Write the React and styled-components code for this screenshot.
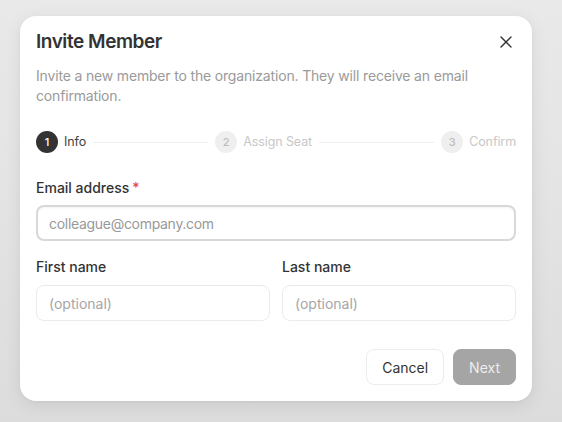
import React, { useState } from 'react';
import styled, { createGlobalStyle } from 'styled-components';
import { X } from 'lucide-react';

const GlobalStyle = createGlobalStyle`
  html, body {
    margin: 0;
    padding: 0;
    height: 100%;
  }
  body {
    font-family: 'Inter', 'Noto Sans', sans-serif;
    background: linear-gradient(180deg, #e9e9e9 0%, #e2e2e2 60%, #dcdcdc 100%);
    color: #333;
  }
  * {
    box-sizing: border-box;
  }
`;

const Page = styled.div`
  padding: 16px 0 0 20px;
  min-height: 422px;
`;

const Card = styled.div`
  width: 512px;
  background: #ffffff;
  border-radius: 16px;
  padding: 14px 16px 16px;
  box-shadow: 0 4px 18px rgba(0, 0, 0, 0.08), 0 1px 3px rgba(0, 0, 0, 0.05);
`;

const Header = styled.div`
  display: flex;
  align-items: center;
  justify-content: space-between;
`;

const Title = styled.h2`
  margin: 0;
  font-size: 19px;
  line-height: 24px;
  font-weight: 600;
  letter-spacing: -0.45px;
  color: #333;
`;

const CloseButton = styled.button`
  width: 20px;
  height: 20px;
  padding: 0;
  border: none;
  background: none;
  color: #333;
  display: flex;
  align-items: center;
  justify-content: center;
  cursor: pointer;
`;

const Description = styled.p`
  margin: 12px 0 0;
  font-size: 14px;
  line-height: 20px;
  letter-spacing: -0.17px;
  color: #9a9a9a;
`;

const Stepper = styled.div`
  display: flex;
  align-items: center;
  gap: 7px;
  margin-top: 25px;
`;

const Step = styled.div`
  display: flex;
  align-items: center;
  gap: 6px;
`;

const StepCircle = styled.span`
  width: 22px;
  height: 22px;
  border-radius: 50%;
  display: flex;
  align-items: center;
  justify-content: center;
  font-size: 11px;
  font-weight: 500;
  background: ${(p) => (p.active ? '#333' : '#efefef')};
  color: ${(p) => (p.active ? '#fff' : '#bdbdbd')};
`;

const StepLabel = styled.span`
  font-size: 12.5px;
  line-height: 20px;
  letter-spacing: -0.1px;
  color: ${(p) => (p.active ? '#444' : '#c8c8c8')};
`;

const StepLine = styled.div`
  flex: 1;
  height: 1px;
  background: #efefef;
`;

const Field = styled.div`
  display: flex;
  flex-direction: column;
  gap: ${(p) => p.gap || '8px'};
  margin-top: ${(p) => p.top || '0px'};
`;

const Label = styled.label`
  font-size: 14px;
  line-height: 20px;
  font-weight: 500;
  color: #333;
`;

const Required = styled.span`
  color: #e5484d;
  margin-left: 3px;
`;

const Input = styled.input`
  width: 100%;
  height: 36px;
  padding: 0 12px;
  font-family: inherit;
  font-size: 14px;
  color: #333;
  border-radius: 8px;
  border: 1px solid #ebebeb;
  background: #fff;
  outline: none;

  &::placeholder {
    color: #a6a6a6;
  }
`;

const EmailInput = styled(Input)`
  border: 2px solid #d8d8d8;
  padding: 0 11px;
  letter-spacing: -0.3px;
  box-shadow: inset 0 1px 2px rgba(0, 0, 0, 0.05);

  &::placeholder {
    color: #999;
  }
`;

const Row = styled.div`
  display: grid;
  grid-template-columns: 1fr 1fr;
  gap: 12px;
  margin-top: 16px;
`;

const Footer = styled.div`
  display: flex;
  justify-content: flex-end;
  gap: 9px;
  margin-top: 28px;
`;

const Button = styled.button`
  height: 36px;
  padding: 0 15px;
  border-radius: 8px;
  font-family: inherit;
  font-size: 14px;
  cursor: pointer;
  border: 1px solid ${(p) => (p.primary ? '#a5a5a5' : '#ececec')};
  background: ${(p) => (p.primary ? '#a5a5a5' : '#fff')};
  color: ${(p) => (p.primary ? '#ededed' : '#333')};
`;

const steps = ['Info', 'Assign Seat', 'Confirm'];

const App = () => {
  const [email, setEmail] = useState('');
  const [firstName, setFirstName] = useState('');
  const [lastName, setLastName] = useState('');
  const current = 0;

  return (
    <>
      <GlobalStyle />
      <Page>
        <Card>
          <Header>
            <Title>Invite Member</Title>
            <CloseButton aria-label="Close">
              <X size={20} strokeWidth={1.6} />
            </CloseButton>
          </Header>
          <Description>
            Invite a new member to the organization. They will receive an email confirmation.
          </Description>

          <Stepper>
            {steps.map((s, i) => (
              <React.Fragment key={s}>
                {i > 0 && <StepLine />}
                <Step>
                  <StepCircle active={i === current}>{i + 1}</StepCircle>
                  <StepLabel active={i === current}>{s}</StepLabel>
                </Step>
              </React.Fragment>
            ))}
          </Stepper>

          <Field top="25px" gap="7px">
            <Label>
              Email address<Required>*</Required>
            </Label>
            <EmailInput
              type="email"
              placeholder="colleague@company.com"
              value={email}
              onChange={(e) => setEmail(e.target.value)}
            />
          </Field>

          <Row>
            <Field>
              <Label>First name</Label>
              <Input
                placeholder="(optional)"
                value={firstName}
                onChange={(e) => setFirstName(e.target.value)}
              />
            </Field>
            <Field>
              <Label>Last name</Label>
              <Input
                placeholder="(optional)"
                value={lastName}
                onChange={(e) => setLastName(e.target.value)}
              />
            </Field>
          </Row>

          <Footer>
            <Button>Cancel</Button>
            <Button primary>Next</Button>
          </Footer>
        </Card>
      </Page>
    </>
  );
};

export default App;
